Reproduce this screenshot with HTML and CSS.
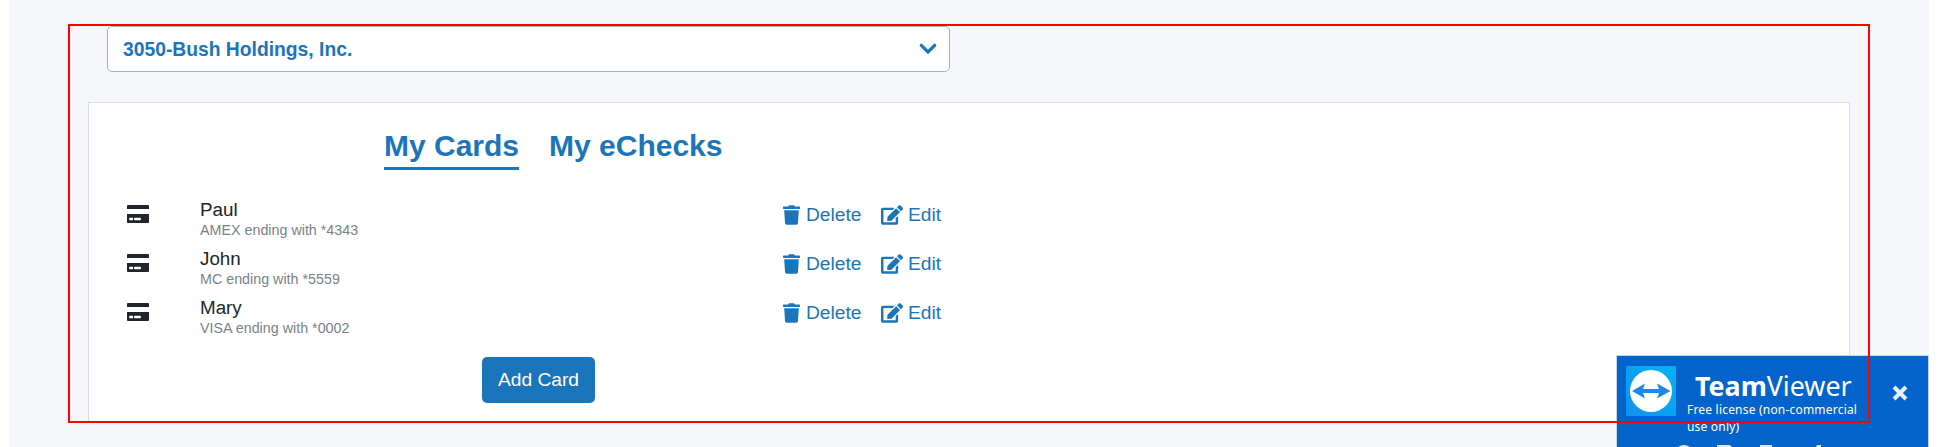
FILE: index.html
```html
<!DOCTYPE html>
<html lang="en">
<head>
<meta charset="utf-8">
<title>Payment methods</title>
<link rel="stylesheet" href="styles.css">
</head>
<body>
<svg class="defs" width="0" height="0">
  <symbol id="card" viewBox="0 0 22 18"><path fill="currentColor" fill-rule="evenodd" d="M1 0h20q1 0 1 1v3H0V1q0-1 1-1zM0 9h22v8q0 1-1 1H1q-1 0-1-1zM2.800 12.800q-.6 0-.6.6v1.200q0 .6.6.6h2.800q.5 0 .5-.6v-1.200q0-.6-.5-.6zM7.700 12.800q-.6 0-.6.6v1.200q0 .6.6.6h5.600q.6 0 .6-.6v-1.200q0-.6-.6-.6z"/></symbol>
  <symbol id="trash" viewBox="0 0 448 512"><path fill="currentColor" d="M432 32H312l-9.400-18.700A24 24 0 0 0 281.100 0H166.800a23.720 23.720 0 0 0-21.400 13.300L136 32H16A16 16 0 0 0 0 48v32a16 16 0 0 0 16 16h416a16 16 0 0 0 16-16V48a16 16 0 0 0-16-16zM53.200 467a48 48 0 0 0 47.900 45h245.800a48 48 0 0 0 47.900-45L416 128H32z"/></symbol>
  <symbol id="edit" viewBox="0 0 576 512"><path fill="currentColor" d="M402.600 83.200l90.200 90.200c3.800 3.800 3.800 10 0 13.800L274.400 405.600l-92.800 10.300c-12.400 1.400-22.900-9.100-21.500-21.500l10.300-92.800L388.800 83.200c3.800-3.800 10-3.800 13.800 0zm162-22.900l-48.800-48.800c-15.200-15.200-39.900-15.200-55.200 0l-35.400 35.400c-3.800 3.800-3.800 10 0 13.800l90.200 90.200c3.800 3.800 10 3.800 13.800 0l35.400-35.400c15.200-15.300 15.200-40 0-55.200zM384 346.200V448H64V128h229.800c3.200 0 6.200-1.300 8.500-3.500l40-40c7.600-7.600 2.200-20.500-8.500-20.500H48C21.500 64 0 85.500 0 112v352c0 26.500 21.500 48 48 48h352c26.500 0 48-21.500 48-48V306.200c0-10.700-12.900-16-20.500-8.500l-40 40c-2.200 2.300-3.500 5.300-3.500 8.500z"/></symbol>
</svg>
<main class="page">
  <div class="select"><span>3050-Bush Holdings, Inc.</span><svg width="18" height="12" viewBox="0 0 18 12"><path d="M2.300 2.300 9 9 15.700 2.300" fill="none" stroke="currentColor" stroke-width="3.200" stroke-linecap="round"/></svg></div>
  <section class="panel">
    <nav class="tabs"><a class="tab active">My Cards</a><a class="tab">My eChecks</a></nav>
    <ul class="cards">
      <li class="row"><svg class="card-icon"><use href="#card"/></svg><div class="info"><div class="name">Paul</div><div class="sub">AMEX ending with *4343</div></div><a class="action delete"><svg class="trash"><use href="#trash"/></svg>Delete</a><a class="action"><svg class="edit"><use href="#edit"/></svg>Edit</a></li>
      <li class="row"><svg class="card-icon"><use href="#card"/></svg><div class="info"><div class="name">John</div><div class="sub">MC ending with *5559</div></div><a class="action delete"><svg class="trash"><use href="#trash"/></svg>Delete</a><a class="action"><svg class="edit"><use href="#edit"/></svg>Edit</a></li>
      <li class="row"><svg class="card-icon"><use href="#card"/></svg><div class="info"><div class="name">Mary</div><div class="sub">VISA ending with *0002</div></div><a class="action delete"><svg class="trash"><use href="#trash"/></svg>Delete</a><a class="action"><svg class="edit"><use href="#edit"/></svg>Edit</a></li>
    </ul>
    <button class="add">Add Card</button>
  </section>
</main>
<aside class="tv">
  <div class="tv-head">
    <svg class="tv-logo" width="50" height="50" viewBox="0 0 50 50"><defs><linearGradient id="g" x1="1" y1="0" x2="0" y2="1"><stop offset="0" stop-color="#00b4f5"/><stop offset="1" stop-color="#1490ee"/></linearGradient></defs><rect width="50" height="50" rx="1.500" fill="url(#g)"/><circle cx="25" cy="25" r="21" fill="#fff"/><path d="M6 25 19 17.500 17 23H33L31 17.500 44.500 25 31 32.500 33 27H17L19 32.500z" fill="#1e88e8"/></svg>
    <div class="tv-text"><div class="tv-name"><b>Team</b>Viewer</div><div class="tv-license">Free license (non-commercial<br>use only)</div></div>
    <svg class="tv-close" width="16" height="16" viewBox="0 0 16 16"><path d="M2 2 14 14M14 2 2 14" stroke="#e8f1fb" stroke-width="4"/></svg>
  </div>
  <svg class="tv-tools" width="150" height="2" viewBox="0 0 150 2"><path d="M1 2Q7-2 13 2zM40 0h13l2 2H40zM83 0h12v2H83zM140 0h4v2h-5z" fill="#dce8f6"/></svg>
</aside>
<div class="marker"></div>
</body>
</html>
```
FILE: styles.css
```css
* { box-sizing: border-box; }
body { margin: 0; height: 447px; overflow: hidden; background: #fff; font-family: "Liberation Sans", Arial, sans-serif; color: #212529; }
.defs { position: absolute; }
.page { margin: 0 9px; height: 447px; padding: 26px 79px; background: #f5f7fb; }
.select { display: flex; align-items: center; justify-content: space-between; width: 843px; height: 46px; margin-left: 19px; padding: 0 12px 0 15px; border: 1px solid #adb1b6; border-radius: 5px; background: #fff; color: #1b75bb; font-size: 19.3px; font-weight: bold; }
.select span { padding-top: 1px; }
.panel { height: 320px; margin-top: 30px; border: 1px solid #dcdddf; border-bottom: 0; background: #fff; }
.tabs { display: flex; gap: 30px; padding: 24px 0 0 295px; }
.tab { height: 43px; font-size: 30px; line-height: 38px; font-weight: bold; color: #1b75bb; }
.active { border-bottom: 3px solid #1b75bb; }
.cards { list-style: none; margin: 28px 0 0; padding: 0 0 0 38px; }
.row { display: flex; height: 49px; }
.card-icon { width: 22px; height: 18px; margin-top: 7px; }
.info { width: 634px; padding-left: 51px; }
.name { font-size: 18.8px; line-height: 23px; }
.sub { font-size: 14.3px; line-height: 18px; color: #7a828a; }
.action { display: flex; height: 33px; align-items: center; font-size: 19.2px; color: #1b75bb; }
.delete { width: 98px; }
.trash { width: 17px; height: 20px; margin-right: 6px; }
.edit { width: 22px; height: 20px; margin-right: 5px; }
.add { display: block; width: 113px; height: 46px; margin: 12px 0 0 393px; padding: 0; border: 0; border-radius: 5px; background: #1b75bb; color: #fff; font: 19.2px "Liberation Sans", Arial, sans-serif; }
.tv { position: absolute; left: 1616px; top: 355px; width: 313px; height: 92px; padding: 10px 0 0 9px; border: 1px solid #c6d4e6; border-bottom: 0; background: #0464cb; color: #fff; overflow: hidden; font-family: "Noto Sans", sans-serif; }
.tv-head { display: flex; height: 79px; }
.tv-text { width: 206px; padding-left: 11px; }
.tv-name { padding: 1px 0 0 8px; font-size: 26.800px; line-height: 38px; white-space: nowrap; }
.tv-license { margin-top: -4px; font-size: 12px; line-height: 17px; letter-spacing: .2px; white-space: nowrap; }
.tv-close { margin: 19px 0 0 10px; }
.tv-tools { display: block; margin-left: 51px; }
.marker { position: absolute; left: 68px; top: 24px; width: 1802px; height: 399px; border: 2px solid #f00; }
```
